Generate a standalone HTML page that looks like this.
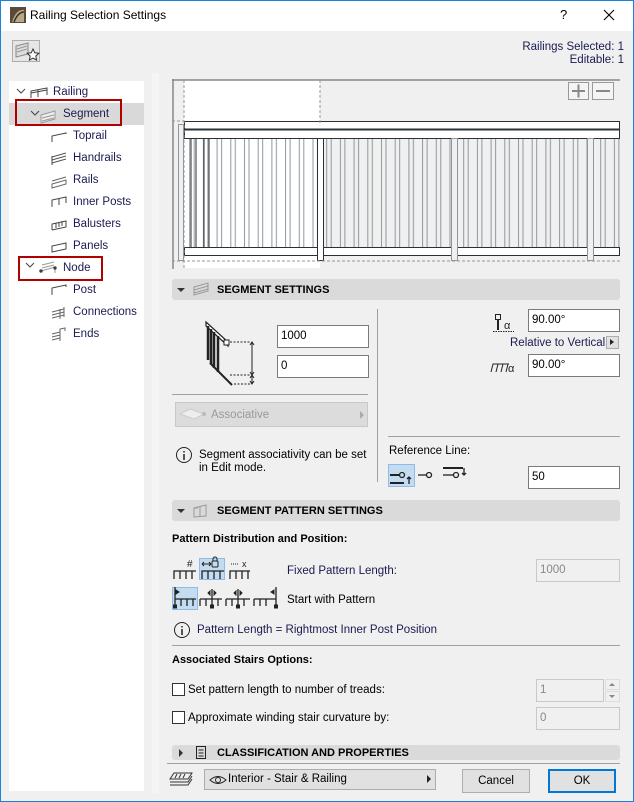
<!DOCTYPE html>
<html><head><meta charset="utf-8">
<style>
*{box-sizing:border-box;margin:0;padding:0}
body{width:634px;height:802px;background:#f0f0f0;font-family:"Liberation Sans",sans-serif;font-size:11.5px;color:#000;position:relative;overflow:hidden}
.a{position:absolute}
.frame{position:absolute;left:0;top:0;width:634px;height:802px;border:1px solid #1883d7;pointer-events:none}
.t{position:absolute;white-space:nowrap}
.inp{position:absolute;background:#fff;border:1px solid #7a7a7a;height:23px;padding:4px 3px;font-size:11.5px}
.dis{background:#f0f0f0;border-color:#c8c8c8;color:#888}
.hdr{position:absolute;left:172px;width:448px;height:21px;background:#dadada;border-radius:3px;font-weight:bold;font-size:11px}
.tri{position:absolute;width:0;height:0}
.cb{position:absolute;width:13px;height:13px;border:1px solid #333;background:#fff}
.sep{position:absolute;height:1px;background:#a0a0a0}
.btn{position:absolute;background:#e1e1e1;border:1px solid #adadad;text-align:center;line-height:22px}
</style></head><body>
<!-- title bar -->
<div class="a" style="left:0;top:0;width:634px;height:31px;background:#fff"></div>
<svg class="a" style="left:10px;top:7px" width="16" height="16"><rect width="16" height="16" fill="#5a4a38"/><path d="M2 15 Q6 2 14 3 L14 15 Z" fill="#b8a888"/><path d="M4 15 Q8 5 14 5" stroke="#3a2e22" stroke-width="1.5" fill="none"/></svg>
<div class="t" style="left:30px;top:8px;font-size:12px">Railing Selection Settings</div>
<div class="t" style="left:560px;top:7px;font-size:13px">?</div>
<svg class="a" style="left:603px;top:9px" width="12" height="12"><path d="M1 1L11 11M11 1L1 11" stroke="#000" stroke-width="1.1"/></svg>
<!-- favorites button -->
<div class="a" style="left:12px;top:40px;width:28px;height:22px;border:1px solid #adadad;background:#e6e6e6"></div>
<svg class="a" style="left:14px;top:42px" width="26" height="20"><path d="M2 4L14 1V12L2 15Z" fill="#ddd" stroke="#888"/><path d="M3 7L13 4M3 10L13 7" stroke="#999"/><path d="M19 7l1.8 3.8 4 .5-3 2.8.8 4-3.6-2-3.6 2 .8-4-3-2.8 4-.5z" fill="#fff" stroke="#333"/></svg>
<div class="t" style="right:10px;top:41px;text-align:right;color:#1a1a50;line-height:13px">Railings Selected: 1<br>Editable: 1</div>
<!-- tree panel -->
<div class="a" style="left:9px;top:81px;width:135px;height:710px;background:#fff"></div>
<div class="a" style="left:9px;top:103px;width:135px;height:22px;background:#d9d9d9"></div>
<div class="a" style="left:15px;top:99px;width:107px;height:27px;border:2px solid #b00000"></div>
<div class="a" style="left:18px;top:256px;width:85px;height:25px;border:2px solid #b00000"></div>
<svg class="a" style="left:14px;top:85px" width="130" height="260" fill="none" stroke="#444" stroke-width="1">
<path d="M3 4l4 4 4-4"/><path d="M17 26l4 4 4-4"/><path d="M12 178l4 4 4-4"/>
<path d="M17 13V6l16-3v7M24 12V5M17 8l16-3"/>
<path d="M27 30l14-4v8l-14 4z" stroke="#999" fill="#eee"/><path d="M28 33l12-3M28 36l12-3" stroke="#999"/>
<path d="M38 57v-6l14-3v1" /><path d="M38 78l14-4M38 75l14-4M38 72l14-4" stroke="#555"/><path d="M38 80v-9" />
<path d="M38 99l14-4v4l-14 4zM38 96l14-4" stroke="#666"/>
<path d="M38 122v-7l14-3v6M45 120v-6"/>
<path d="M38 145v-6l14-3v6l-14 3M42 143v-5M45 142v-5M48 141v-5"/>
<path d="M38 167v-6l14-3v6z"/>
<path d="M27 186l14-4v6M28 183l12-3M28 180l12-3" stroke="#999"/><circle cx="27" cy="186" r="1.2" fill="#333"/><circle cx="41" cy="183" r="1.2" fill="#333"/>
<path d="M38 210v-7l14-3v2"/>
<path d="M38 233l12-3M38 230l12-3M38 227l12-3M46 234v-10M50 232v-10" stroke="#666"/>
<path d="M38 255l8-2M38 252l8-2M38 249l8-2M46 256v-12l5-1v3" stroke="#666"/>
</svg>
<div class="t" style="left:53px;top:86px;color:#1a1a50">Railing</div>
<div class="t" style="left:63px;top:108px;color:#1a1a50">Segment</div>
<div class="t" style="left:73px;top:130px;color:#1a1a50">Toprail</div>
<div class="t" style="left:73px;top:152px;color:#1a1a50">Handrails</div>
<div class="t" style="left:73px;top:174px;color:#1a1a50">Rails</div>
<div class="t" style="left:73px;top:196px;color:#1a1a50">Inner Posts</div>
<div class="t" style="left:73px;top:218px;color:#1a1a50">Balusters</div>
<div class="t" style="left:73px;top:240px;color:#1a1a50">Panels</div>
<div class="t" style="left:63px;top:262px;color:#1a1a50">Node</div>
<div class="t" style="left:73px;top:284px;color:#1a1a50">Post</div>
<div class="t" style="left:73px;top:306px;color:#1a1a50">Connections</div>
<div class="t" style="left:73px;top:328px;color:#1a1a50">Ends</div>
<div class="a" style="left:152px;top:73px;width:7px;height:720px;background:#f5f5f5"></div>
<!-- preview -->
<svg class="a" style="left:172px;top:79px" width="448" height="190">
<defs><pattern id="bal" x="2" y="0" width="13.7" height="200" patternUnits="userSpaceOnUse"><line x1="2" y1="0" x2="2" y2="200" stroke="#8f979c" stroke-width="1"/><line x1="6.5" y1="0" x2="6.5" y2="200" stroke="#8f979c" stroke-width="1"/></pattern></defs>
<rect x="0" y="0" width="448" height="190" fill="#f0f0f0"/>
<rect x="12" y="1" width="136" height="188" fill="#fff"/>
<path d="M1 0V190M0 1H448" stroke="#888" stroke-width="1.5"/>
<rect x="12" y="59" width="436" height="110" fill="url(#bal)"/>
<path d="M19 59V168M24 59V168M32 59V168M37 59V168" stroke="#263238"/>
<rect x="12.5" y="42.5" width="435" height="8" fill="#fff" stroke="#263238"/>
<rect x="12.5" y="50.5" width="435" height="9" fill="#fff" stroke="#263238"/>
<line x1="12" y1="50.5" x2="447" y2="50.5" stroke="#263238" stroke-width="2"/>
<rect x="12.5" y="168.5" width="435" height="8" fill="#fff" stroke="#263238"/>
<rect x="145.5" y="59.5" width="6" height="122" fill="#fff" stroke="#263238"/>
<rect x="279.5" y="59.5" width="6" height="122" fill="#f0f0f0" stroke="#8f979c"/>
<rect x="415.5" y="59.5" width="6" height="122" fill="#f0f0f0" stroke="#8f979c"/>
<rect x="6.5" y="45.5" width="5" height="136" fill="none" stroke="#8f979c"/>
<path d="M12 1V190M148 1V45M0 182H448M0 42H12" stroke="#999" stroke-dasharray="3 2"/>
<rect x="396.5" y="3.5" width="20" height="17" fill="#f4f4f4" stroke="#999"/>
<rect x="420.5" y="3.5" width="21" height="17" fill="#f4f4f4" stroke="#999"/>
<path d="M400 12h13M406.5 5.5v13M424 12h14" stroke="#888" stroke-width="2"/>
</svg>
<!-- segment settings header -->
<div class="hdr" style="top:279px"></div>
<div class="tri" style="left:177px;top:288px;border-left:4px solid transparent;border-right:4px solid transparent;border-top:4px solid #333"></div>
<svg class="a" style="left:192px;top:282px" width="18" height="14" fill="none" stroke="#999"><path d="M2 5l14-4v8l-14 4z"/><path d="M2 8l14-4M2 11l14-4"/></svg>
<div class="t" style="left:217px;top:284px;font-weight:bold;font-size:11px">SEGMENT SETTINGS</div>
<!-- left column -->
<svg class="a" style="left:200px;top:318px" width="60" height="68" fill="none" stroke="#222">
<path d="M6 4l22 20v4L6 8z" stroke-width="1.2" fill="#fff"/><rect x="24" y="22" width="5" height="5" fill="#fff"/>
<path d="M8 8V42M11 11V46M14 14V50M18 18V54" stroke-width="2.5"/>
<path d="M10 45l22 22" stroke-width="2"/>
<path d="M30 24H51M30 57H51M34 66H51" stroke-dasharray="2 1.5"/>
<path d="M52 24V57M52 57V66M50 27l2-3 2 3M50 54l2 3 2-3M50 60l2-3 2 3M50 63l2 3 2-3"/>
</svg>
<div class="inp" style="left:277px;top:325px;width:92px">1000</div>
<div class="inp" style="left:277px;top:355px;width:92px">0</div>
<div class="sep" style="left:172px;top:394px;width:196px"></div>
<div class="a" style="left:175px;top:402px;width:193px;height:25px;background:#dcdcdc;border:1px solid #c8c8c8"></div>
<svg class="a" style="left:178px;top:407px" width="30" height="14"><path d="M2 7l10-5 14 5-10 5z" fill="#eee" stroke="#ccc"/><circle cx="26" cy="7" r="2" fill="#bbb"/></svg>
<div class="t" style="left:211px;top:409px;color:#999">Associative</div>
<div class="tri" style="left:360px;top:411px;border-top:4px solid transparent;border-bottom:4px solid transparent;border-left:4px solid #aaa"></div>
<svg class="a" style="left:175px;top:446px" width="18" height="18"><circle cx="9" cy="9" r="7.5" fill="none" stroke="#222"/><path d="M9 8v6M9 5v1.5" stroke="#222" stroke-width="1.5"/></svg>
<div class="t" style="left:199px;top:449px;line-height:13px">Segment associativity can be set<br>in Edit mode.</div>
<div class="a" style="left:377px;top:309px;width:1px;height:173px;background:#a0a0a0"></div>
<!-- right column -->
<svg class="a" style="left:492px;top:313px" width="24" height="20" fill="none" stroke="#222"><rect x="3.5" y="1.5" width="5" height="5"/><path d="M6 6.5V17" stroke-width="2"/><path d="M1 18.5H22" stroke-dasharray="1.5 1"/><text x="12" y="16" font-size="11" fill="#222" stroke="none" font-family="Liberation Sans">α</text></svg>
<div class="inp" style="left:528px;top:309px;width:92px">90.00°</div>
<div class="t" style="left:510px;top:337px;color:#1a1a50">Relative to Vertical</div>
<div class="a" style="left:606px;top:336px;width:13px;height:13px;border:1px solid #adadad;background:#e1e1e1"></div>
<div class="tri" style="left:610px;top:339px;border-top:3.5px solid transparent;border-bottom:3.5px solid transparent;border-left:4px solid #222"></div>
<svg class="a" style="left:489px;top:360px" width="30" height="14" fill="none" stroke="#222"><path d="M2 12l2-8h16M9 4l-2 8M14 4l-2 8M19 4l-2 8"/><text x="19" y="12" font-size="11" fill="#222" stroke="none" font-family="Liberation Sans">α</text></svg>
<div class="inp" style="left:528px;top:354px;width:92px">90.00°</div>
<div class="sep" style="left:388px;top:436px;width:232px"></div>
<div class="t" style="left:389px;top:445px">Reference Line:</div>
<div class="a" style="left:388px;top:464px;width:27px;height:23px;background:#c4dcf2;border:1px solid #8fbbe6"></div>
<svg class="a" style="left:388px;top:464px" width="90" height="24" fill="none" stroke="#222" stroke-width="1.3">
<path d="M2 11H12M2 19H16" stroke-width="2"/><circle cx="14" cy="11" r="2.5"/><path d="M21 20V13M19 15l2-2 2 2"/>
<path d="M30 11H38"/><circle cx="41" cy="11" r="2.5"/>
<path d="M55 4H75" stroke-width="2"/><path d="M55 11H65"/><circle cx="68" cy="11" r="2.5"/><path d="M76 4V11M74 9l2 2 2-2"/>
</svg>
<div class="inp" style="left:528px;top:466px;width:92px">50</div>
<!-- segment pattern header -->
<div class="hdr" style="top:500px"></div>
<div class="tri" style="left:177px;top:509px;border-left:4px solid transparent;border-right:4px solid transparent;border-top:4px solid #333"></div>
<svg class="a" style="left:192px;top:503px" width="18" height="15" fill="none" stroke="#999"><path d="M2 5l12-3v11l-12 1zM8 4v10M2 5h4"/></svg>
<div class="t" style="left:217px;top:505px;font-weight:bold;font-size:11px">SEGMENT PATTERN SETTINGS</div>
<div class="t" style="left:172px;top:533px;font-weight:bold;font-size:11px">Pattern Distribution and Position:</div>
<!-- pattern icons -->
<div class="a" style="left:199px;top:558px;width:26px;height:22px;background:#c4dcf2;border:1px solid #8fbbe6"></div>
<div class="a" style="left:172px;top:587px;width:26px;height:23px;background:#c4dcf2;border:1px solid #8fbbe6"></div>
<svg class="a" style="left:172px;top:555px" width="110" height="60" fill="none" stroke="#222">
<path d="M2 24V16H24M2 16v8M8 16v8M14 16v8M20 16v8" stroke-width="1.3"/><text x="15" y="12" font-size="10" fill="#222" stroke="none" font-family="Liberation Sans">#</text>
<path d="M30 24V16H52M36 16v8M42 16v8M48 16v8" stroke-width="1.3"/><path d="M30 9H39M30 9l2-2M30 9l2 2M39 9l-2-2M39 9l-2 2"/><rect x="40" y="6" width="6" height="6" rx="1"/><path d="M41 6V4a2 2 0 0 1 4 0v2"/>
<path d="M58 24V16H78M64 16v8M70 16v8M76 16v8" stroke-width="1.3"/><path d="M59 9H67" stroke-dasharray="1 1"/><text x="70" y="12" font-size="9" fill="#222" stroke="none" font-family="Liberation Sans">x</text>
<path d="M3 51V32M3 44H24M3 51v-7M9 44v7M15 44v7M21 44v7" stroke-width="1.3"/><path d="M4 35l3 2-3 2z" fill="#222"/><rect x="1.5" y="50" width="3" height="3" fill="#222"/>
<path d="M28 44H50M28 44v7M34 44v7M46 44v7M40 34V52" stroke-width="1.3"/><path d="M38 36l-2 2 2 2zM42 36l2 2-2 2z" fill="#222"/><rect x="38.5" y="50" width="3" height="3" fill="#222"/>
<path d="M54 44H78M54 44v7M60 44v7M66 44v7M72 44v7M66 34V52" stroke-width="1.3"/><path d="M64 36l-2 2 2 2zM68 36l2 2-2 2z" fill="#222"/><rect x="64.5" y="50" width="3" height="3" fill="#222"/>
<path d="M82 44H104M82 44v7M88 44v7M94 44v7M104 32V52" stroke-width="1.3"/><path d="M102 35l-3 2 3 2z" fill="#222"/><rect x="102.5" y="50" width="3" height="3" fill="#222"/>
</svg>
<div class="t" style="left:287px;top:565px;color:#1a1a50">Fixed Pattern Length:</div>
<div class="inp dis" style="left:536px;top:559px;width:84px">1000</div>
<div class="t" style="left:287px;top:594px">Start with Pattern</div>
<svg class="a" style="left:173px;top:621px" width="18" height="18"><circle cx="9" cy="9" r="7.5" fill="none" stroke="#222"/><path d="M9 8v6M9 5v1.5" stroke="#222" stroke-width="1.5"/></svg>
<div class="t" style="left:197px;top:624px;color:#1a1a50">Pattern Length = Rightmost Inner Post Position</div>
<div class="sep" style="left:172px;top:645px;width:448px"></div>
<div class="t" style="left:172px;top:654px;font-weight:bold;font-size:11px">Associated Stairs Options:</div>
<div class="cb" style="left:172px;top:683px"></div>
<div class="t" style="left:188px;top:684px">Set pattern length to number of treads:</div>
<div class="inp dis" style="left:536px;top:679px;width:68px">1</div>
<div class="a" style="left:605px;top:679px;width:15px;height:11px;border:1px solid #ddd;background:#f0f0f0"></div>
<div class="a" style="left:605px;top:691px;width:15px;height:11px;border:1px solid #ddd;background:#f0f0f0"></div>
<div class="tri" style="left:609px;top:683px;border-left:3px solid transparent;border-right:3px solid transparent;border-bottom:3px solid #888"></div>
<div class="tri" style="left:609px;top:695px;border-left:3px solid transparent;border-right:3px solid transparent;border-top:3px solid #888"></div>
<div class="cb" style="left:172px;top:711px"></div>
<div class="t" style="left:188px;top:712px">Approximate winding stair curvature by:</div>
<div class="inp dis" style="left:536px;top:707px;width:84px">0</div>
<!-- classification header -->
<div class="hdr" style="top:745px;height:15px"></div>
<div class="tri" style="left:179px;top:749px;border-top:4px solid transparent;border-bottom:4px solid transparent;border-left:4px solid #333"></div>
<svg class="a" style="left:195px;top:745px" width="12" height="15" fill="none" stroke="#222"><rect x="1.5" y="1.5" width="9" height="12"/><path d="M3.5 5h5M3.5 8h5M3.5 11h5"/></svg>
<div class="t" style="left:217px;top:747px;font-weight:bold;font-size:11px">CLASSIFICATION AND PROPERTIES</div>
<div class="sep" style="left:167px;top:763px;width:453px"></div>
<!-- bottom -->
<svg class="a" style="left:168px;top:770px" width="28" height="20" fill="none" stroke="#333"><path d="M6 3h18l-4 6H2z"/><path d="M2 12h18l4-6M2 15h18l4-6"/><path d="M9 4l-2 4M13 4l-2 4M17 4l-2 4"/></svg>
<div class="a" style="left:204px;top:769px;width:232px;height:21px;background:#e1e1e1;border:1px solid #adadad"></div>
<svg class="a" style="left:209px;top:774px" width="18" height="12" fill="none" stroke="#222"><path d="M1 6Q9 -1 17 6Q9 13 1 6z"/><circle cx="9" cy="6" r="2.5"/></svg>
<div class="t" style="left:228px;top:773px">Interior - Stair &amp; Railing</div>
<div class="tri" style="left:427px;top:775px;border-top:4px solid transparent;border-bottom:4px solid transparent;border-left:4px solid #222"></div>
<div class="btn" style="left:462px;top:769px;width:68px;height:24px">Cancel</div>
<div class="btn" style="left:548px;top:769px;width:68px;height:24px;border:2px solid #0078d7;line-height:20px">OK</div>
<div class="frame"></div>
</body></html>
